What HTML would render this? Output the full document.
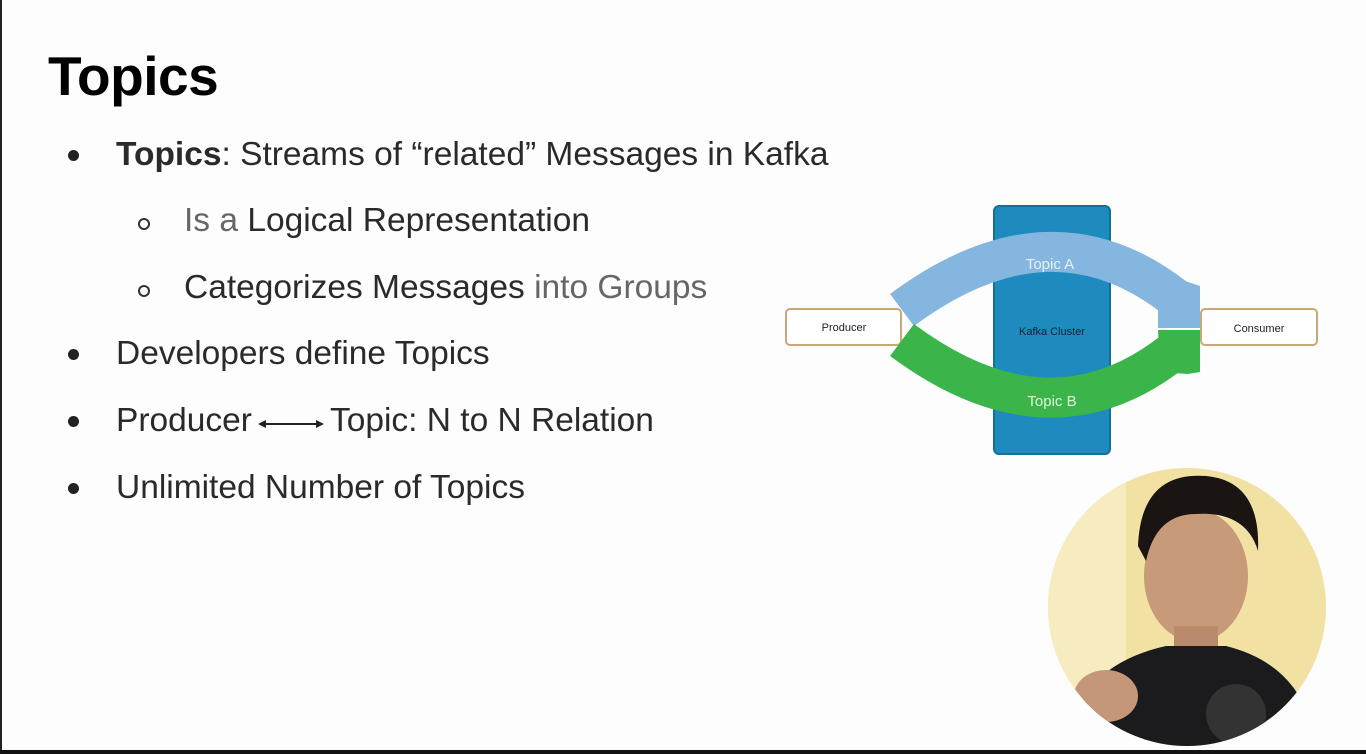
<!DOCTYPE html>
<html><head><style>
html,body{margin:0;padding:0}
body{width:1366px;height:754px;background:#fdfdfd;position:relative;overflow:hidden;font-family:"Liberation Sans",Arial,sans-serif}
.bl{position:absolute;left:0;top:0;width:2px;height:754px;background:#222}
.bb{position:absolute;left:0;top:750px;width:1366px;height:4px;background:#111}
h1{position:absolute;left:48px;top:44px;margin:0;font-size:55px;font-weight:bold;color:#000;letter-spacing:-0.5px}
.t{position:absolute;font-size:33.5px;color:#2a2a2a;white-space:nowrap;line-height:36px}
.d{position:absolute;width:11px;height:11px;border-radius:50%;background:#222}
.o{position:absolute;width:8px;height:8px;border-radius:50%;border:2px solid #333}
.g{color:#666}
</style></head><body>
<div class="bl"></div><div class="bb"></div>
<h1>Topics</h1>
<div class="d" style="left:68px;top:150px"></div>
<div class="t" style="left:116px;top:137px"><b>Topics</b>: Streams of “related” Messages in Kafka</div>
<div class="o" style="left:138px;top:218px"></div>
<div class="t" style="left:184px;top:203px"><span class="g">Is a </span>Logical Representation</div>
<div class="o" style="left:138px;top:285px"></div>
<div class="t" style="left:184px;top:270px">Categorizes Messages <span class="g">into Groups</span></div>
<div class="d" style="left:68px;top:349px"></div>
<div class="t" style="left:116px;top:336px">Developers define Topics</div>
<div class="d" style="left:68px;top:416px"></div>
<div class="t" style="left:116px;top:403px">Producer<span style="display:inline-block;width:78px;position:relative;height:10px"><svg style="position:absolute;left:6px;top:-2px" width="66" height="10"><path d="M3 5H63" stroke="#222" stroke-width="2"/><path d="M0 5L8 1V9Z M66 5L58 1V9Z" fill="#222"/></svg></span>Topic: N to N Relation</div>
<div class="d" style="left:68px;top:483px"></div>
<div class="t" style="left:116px;top:470px">Unlimited Number of Topics</div>

<svg style="position:absolute;left:780px;top:200px" width="550" height="260">
<rect x="214" y="6" width="116" height="248" rx="5" fill="#1d8bbd" stroke="#156f99" stroke-width="2"/>
<rect x="6" y="109" width="115" height="36" rx="4" fill="#fff" stroke="#c9a878" stroke-width="2"/>
<rect x="421" y="109" width="116" height="36" rx="4" fill="#fff" stroke="#c9a878" stroke-width="2"/>
<path d="M122 110 Q270 0 395 98" stroke="#85b6df" stroke-width="40" fill="none"/>
<path d="M378 70 L408 82 L420 86 L420 128 L378 128Z" fill="#85b6df"/>
<path d="M122 140 Q270 250 395 150" stroke="#3bb54a" stroke-width="40" fill="none"/>
<path d="M378 130 L420 130 L420 172 L408 174 L380 172Z" fill="#3bb54a"/>
<text x="270" y="69" font-size="15" fill="#e6f0fa" text-anchor="middle">Topic A</text>
<text x="272" y="206" font-size="15" fill="#d8f5da" text-anchor="middle">Topic B</text>
<text x="272" y="135" font-size="11" fill="#123" text-anchor="middle">Kafka Cluster</text>
<text x="64" y="131" font-size="11" fill="#222" text-anchor="middle">Producer</text>
<text x="479" y="132" font-size="11" fill="#222" text-anchor="middle">Consumer</text>
</svg>

<svg style="position:absolute;left:1046px;top:466px" width="282" height="282">
<defs><clipPath id="c"><circle cx="141" cy="141" r="139"/></clipPath></defs>
<g clip-path="url(#c)">
<rect width="282" height="282" fill="#f1e2a4"/>
<rect x="0" y="0" width="80" height="282" fill="#f6ecc0"/>
<ellipse cx="150" cy="110" rx="52" ry="66" fill="#c79a7a"/>
<path d="M92 80 Q95 5 160 10 Q215 15 212 85 Q200 45 150 48 Q110 48 100 95Z" fill="#1a1512"/>
<rect x="128" y="160" width="44" height="40" fill="#b98a6c"/>
<path d="M20 282 Q30 200 120 180 L180 180 Q260 200 270 282Z" fill="#1b1b1d"/>
<ellipse cx="60" cy="230" rx="32" ry="26" fill="#c59779"/>
<circle cx="190" cy="248" r="30" fill="#333"/>
</g>
</svg>
</body></html>
